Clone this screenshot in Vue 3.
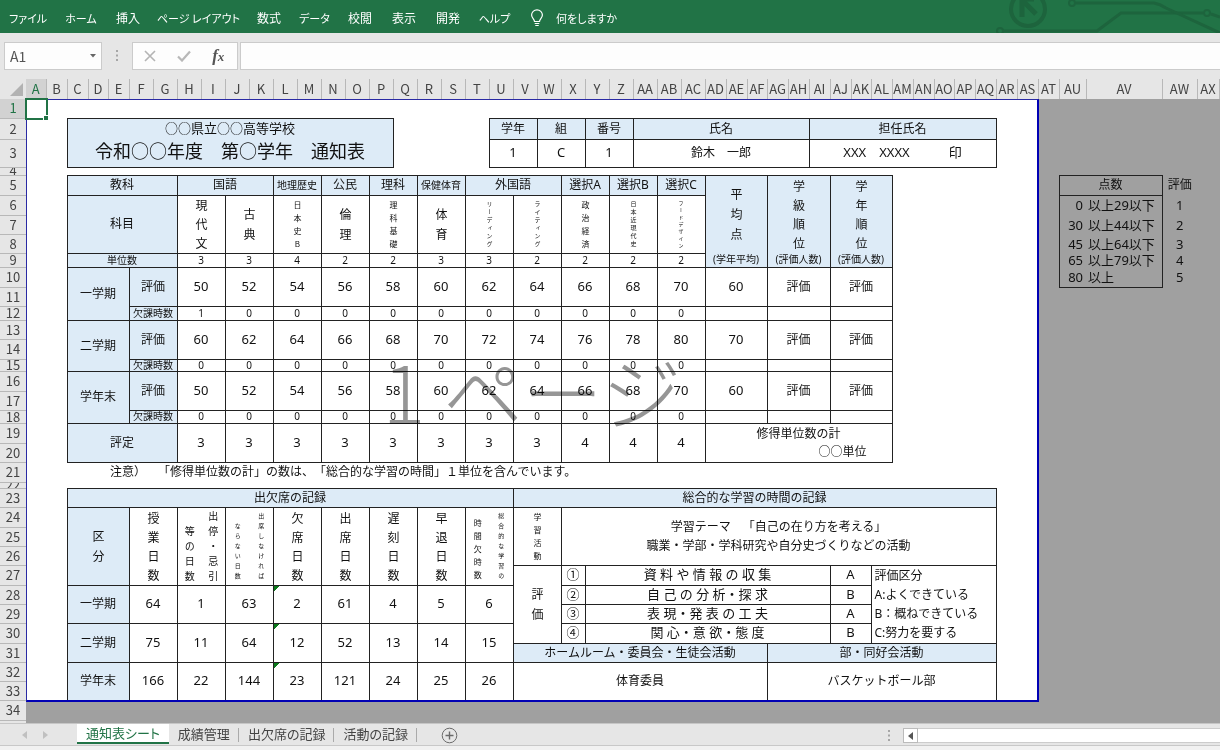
<script setup>
import { ref } from 'vue'

const menus = ['ファイル', 'ホーム', '挿入', 'ページ レイアウト', '数式', 'データ', '校閲', '表示', '開発', 'ヘルプ']
const isKana = (text) => /^[ァ-ー ]+$/.test(text)
const tabs = ['通知表シート', '成績管理', '出欠席の記録', '活動の記録']
const nameBox = ref('A1')
const formula = ref('')

const colWidths = [
  20, 21, 21, 20, 21,
  ...Array(24).fill(24),
  21, 21, 20, 21, 21, 21, 21, 20, 21, 21, 21, 20, 21, 21, 21, 21,
  21, 27, 76, 35, 22,
]
const rowHeights = [
  19, 21, 28, 8, 20, 20, 19, 19, 14, 20, 19, 14, 19, 20, 12, 20, 19, 13,
  20, 19, 20, 6, 19, 20, 19, 19, 20, 19, 19, 20, 19, 19, 19, 20, 19,
]
const HEAD_W = 26
const HEAD_H = 20
const PRINT_COLS = 45
const PRINT_ROWS = 33

const sum = (list) => list.reduce((a, b) => a + b, 0)
const tableWidth = HEAD_W + sum(colWidths)
const printWidth = sum(colWidths.slice(0, PRINT_COLS)) + 1
const printHeight = sum(rowHeights.slice(0, PRINT_ROWS)) + 2

const colName = (n) => (n > 26 ? String.fromCharCode(64 + Math.floor((n - 1) / 26)) : '') + String.fromCharCode(65 + ((n - 1) % 26))
const colIndex = (name) => [...name].reduce((a, ch) => a * 26 + ch.charCodeAt(0) - 64, 0)

const cells = new Map()
const covered = new Set()

function put(range, text, cls = '', extra = {}) {
  const [from, to = from] = range.split(':')
  const [, c1, r1] = from.match(/([A-Z]+)(\d+)/)
  const [, c2, r2] = to.match(/([A-Z]+)(\d+)/)
  const left = colIndex(c1)
  const right = colIndex(c2)
  const top = Number(r1)
  const bottom = Number(r2)
  for (let r = top; r <= bottom; r++) for (let c = left; c <= right; c++) covered.add(r + '-' + c)
  cells.set(top + '-' + left, { lines: text === '' ? [] : String(text).split('\n'), cls, colspan: right - left + 1, rowspan: bottom - top + 1, ...extra })
}
const stack = (range, cls, ...stacks) => put(range, '', cls, { stacks: stacks.map(([text, size]) => ({ chars: [...text], size })) })

put('C2:P2', '○○県立○○高等学校', 'box blue open-bottom mid')
put('C3:P3', '令和○○年度　第○学年　通知表', 'box blue open-top title')

put('U2:V2', '学年', 'box blue')
put('W2:X2', '組', 'box blue')
put('Y2:Z2', '番号', 'box blue')
put('AA2:AH2', '氏名', 'box blue')
put('AI2:AQ2', '担任氏名', 'box blue')
put('U3:V3', '1', 'box mid')
put('W3:X3', 'C', 'box mid')
put('Y3:Z3', '1', 'box mid')
put('AA3:AH3', '鈴木　一郎', 'box')
put('AI3:AQ3', 'XXX　XXXX　　　印', 'box mid')

put('C5:G5', '教科', 'box blue')
put('H5:K5', '国語', 'box blue')
put('L5:M5', '地理歴史', 'box blue small')
put('N5:O5', '公民', 'box blue')
put('P5:Q5', '理科', 'box blue')
put('R5:S5', '保健体育', 'box blue small')
put('T5:W5', '外国語', 'box blue')
put('X5:Y5', '選択A', 'box blue')
put('Z5:AA5', '選択B', 'box blue')
put('AB5:AC5', '選択C', 'box blue')
stack('AD5:AF8', 'box blue open-bottom', ['平均点', 'wide'])
stack('AG5:AI8', 'box blue open-bottom', ['学級順位', 'large'])
stack('AJ5:AL8', 'box blue open-bottom', ['学年順位', 'large'])
put('AD9:AF9', '(学年平均)', 'box blue open-top small')
put('AG9:AI9', '(評価人数)', 'box blue open-top small')
put('AJ9:AL9', '(評価人数)', 'box blue open-top small')
put('C6:G8', '科目', 'box blue')
put('C9:G9', '単位数', 'box blue small')

const pairs = ['H:I', 'J:K', 'L:M', 'N:O', 'P:Q', 'R:S', 'T:U', 'V:W', 'X:Y', 'Z:AA', 'AB:AC'].map((p) => p.split(':'))
const subjects = [
  ['現代文', 'large'], ['古典', 'wide'], ['日本史B', 'tiny'], ['倫理', 'wide'], ['理科基礎', 'tiny'], ['体育', 'wide'],
  ['リーディング', 'micro'], ['ライティング', 'micro'], ['政治経済', 'tiny'], ['日本近現代史', 'micro'], ['フードデザイン', 'nano'],
]
const credits = [3, 3, 4, 2, 2, 3, 3, 2, 2, 2, 2]
const finals = [3, 3, 3, 3, 3, 3, 3, 3, 4, 4, 4]
pairs.forEach(([a, b], i) => {
  stack(`${a}6:${b}8`, 'box', subjects[i])
  put(`${a}9:${b}9`, credits[i], 'box small')
  put(`${a}19:${b}20`, finals[i], 'box mid')
})

const terms = [
  { name: '一学期', row: 10, base: 50, average: 60, absent: 1 },
  { name: '二学期', row: 13, base: 60, average: 70, absent: 0 },
  { name: '学年末', row: 16, base: 50, average: 60, absent: 0 },
]
terms.forEach(({ name, row, base, average, absent }) => {
  put(`C${row}:E${row + 2}`, name, 'box blue')
  put(`F${row}:G${row + 1}`, '評価', 'box blue')
  put(`F${row + 2}:G${row + 2}`, '欠課時数', 'box blue small')
  pairs.forEach(([a, b], i) => {
    put(`${a}${row}:${b}${row + 1}`, base + i * 2, 'box mid')
    put(`${a}${row + 2}:${b}${row + 2}`, i === 0 ? absent : 0, 'box small')
  })
  put(`AD${row}:AF${row + 1}`, average, 'box mid')
  put(`AG${row}:AI${row + 1}`, '評価', 'box')
  put(`AJ${row}:AL${row + 1}`, '評価', 'box')
  put(`AD${row + 2}:AF${row + 2}`, '', 'box')
  put(`AG${row + 2}:AI${row + 2}`, '', 'box')
  put(`AJ${row + 2}:AL${row + 2}`, '', 'box')
})
put('C19:G20', '評定', 'box blue')
put('AD19:AL20', '修得単位数の計\n○○単位', 'box total')
put('E21:AL21', '注意）　「修得単位数の計」の数は、「総合的な学習の時間」１単位を含んでいます。', 'left')

put('C23:U23', '出欠席の記録', 'box blue')
put('V23:AQ23', '総合的な学習の時間の記録', 'box blue')
stack('C24:E27', 'box blue', ['区分', 'wide'])
stack('F24:G27', 'box', ['授業日数', 'large'])
stack('H24:I27', 'box', ['出停・忌引', 'medium'], ['等の日数', 'medium'])
stack('J24:K27', 'box', ['出席しなければ', 'fine'], ['ならない日数', 'fine'])
stack('L24:M27', 'box', ['欠席日数', 'large'])
stack('N24:O27', 'box', ['出席日数', 'large'])
stack('P24:Q27', 'box', ['遅刻日数', 'large'])
stack('R24:S27', 'box', ['早退日数', 'large'])
stack('T24:U27', 'box', ['総合的な学習の', 'fine'], ['時間欠時数', 'tiny'])

const dayPairs = [['F', 'G'], ...pairs.slice(0, 7)]
const attendance = [
  { name: '一学期', row: 28, values: [64, 1, 63, 2, 61, 4, 5, 6] },
  { name: '二学期', row: 30, values: [75, 11, 64, 12, 52, 13, 14, 15] },
  { name: '学年末', row: 32, values: [166, 22, 144, 23, 121, 24, 25, 26] },
]
attendance.forEach(({ name, row, values }) => {
  put(`C${row}:E${row + 1}`, name, 'box blue')
  values.forEach((v, i) => put(`${dayPairs[i][0]}${row}:${dayPairs[i][1]}${row + 1}`, v, i === 3 ? 'box mid flagged' : 'box mid'))
})

stack('V24:W26', 'box', ['学習活動', 'tiny'])
put('X24:AQ26', '学習テーマ　「自己の在り方を考える」\n職業・学部・学科研究や自分史づくりなどの活動', 'box theme')
stack('V27:W30', 'box', ['評価', 'wide'])
const items = [
  ['①', '資 料 や 情 報 の 収 集', 'A'],
  ['②', '自 己 の 分 析・探 求', 'B'],
  ['③', '表 現・発 表 の 工 夫', 'A'],
  ['④', '関 心・意 欲・態 度', 'B'],
]
items.forEach(([no, text, grade], i) => {
  put(`X${27 + i}`, no, 'box mid')
  put(`Y${27 + i}:AI${27 + i}`, text, 'box mid')
  put(`AJ${27 + i}:AK${27 + i}`, grade, 'box mid')
})
put('AL27:AQ30', '評価区分\nA:よくできている\nB：概ねできている\nC:努力を要する', 'box legend')
put('V31:AF31', 'ホームルーム・委員会・生徒会活動', 'box blue')
put('AG31:AQ31', '部・同好会活動', 'box blue')
put('V32:AF33', '体育委員', 'box')
put('AG32:AQ33', 'バスケットボール部', 'box')

put('AU5:AV5', '点数', 'box')
put('AW5', '評価')
const scale = [['0', '以上29以下'], ['30', '以上44以下'], ['45', '以上64以下'], ['65', '以上79以下'], ['80', '以上']]
scale.forEach(([from, text], i) => {
  const last = i === scale.length - 1 ? ' edge-bottom' : ''
  put(`AU${6 + i}`, from, 'right scale edge-left' + last)
  put(`AV${6 + i}`, text, 'left scale edge-right' + last)
  put(`AW${6 + i}`, i + 1, 'scale')
})

const rows = rowHeights.map((height, r) => {
  const list = []
  colWidths.forEach((_, c) => {
    const key = r + 1 + '-' + (c + 1)
    const cell = cells.get(key)
    const paper = c < PRINT_COLS && r < PRINT_ROWS ? ' paper' : ''
    if (cell) list.push({ ...cell, key, cls: cell.cls + paper })
    else if (!covered.has(key)) list.push({ key, cls: paper, lines: [], colspan: 1, rowspan: 1 })
  })
  return { height, list }
})
</script>

<template>
  <div class="app">
    <header class="ribbon">
      <svg class="circuit" width="230" height="33" viewBox="0 0 230 33" fill="none" stroke="#1d643d" aria-hidden="true">
        <circle cx="38" cy="9" r="17" stroke-width="4" />
        <path d="M32 17V0M30 -1h14M32 0l14 14" stroke-width="5" />
        <circle cx="10" cy="31" r="3" stroke-width="2" />
        <path d="M13 31h94l24 -18h82M221 14l9 3" stroke-width="3" />
        <circle cx="217" cy="13" r="3" stroke-width="2" />
        <circle cx="82" cy="3" r="3" stroke-width="2" />
        <path d="M86 3h78q6 1 12 5l54 25" stroke-width="3" />
      </svg>
      <nav class="menus">
        <button v-for="m in menus" :key="m" type="button" :class="{ kana: isKana(m) }">{{ m }}</button>
      </nav>
      <button type="button" class="tell">
        <svg width="14" height="18" viewBox="0 0 14 18" fill="none" stroke="#fff" stroke-width="1.2">
          <path d="M4.5 12.5C4.500 10 1.600 9 1.600 6a5.400 5.200 0 0 1 10.800 0C12.400 9 9.500 10 9.500 12.500zM4.700 14.500h4.600M5.300 16.500h3.400" />
        </svg>
        <span class="kana">何をしますか</span>
      </button>
    </header>

    <div class="bar">
      <div class="namebox">
        <input v-model="nameBox" aria-label="名前ボックス" />
        <button type="button" aria-label="名前の一覧"><svg width="6" height="4" viewBox="0 0 6 4"><path d="M0 0h6L3 3.500z" fill="#666" /></svg></button>
      </div>
      <svg class="grip" width="3" height="12" viewBox="0 0 3 12" fill="#a6a6a6"><path d="M0 0h2v2H0zM0 4.500h2v2H0zM0 9h2v2H0z" /></svg>
      <div class="actions">
        <button type="button" aria-label="キャンセル"><svg width="12" height="12" viewBox="0 0 12 12" fill="none" stroke="#b4b4b4" stroke-width="1.600"><path d="M1 1l10 10M11 1L1 11" /></svg></button>
        <button type="button" aria-label="入力"><svg width="14" height="12" viewBox="0 0 14 12" fill="none" stroke="#b8b8b8" stroke-width="2.200"><path d="M1 6.500l4 4L13 1.500" /></svg></button>
        <button type="button" class="fx" aria-label="関数の挿入"><i>f</i><i class="x">x</i></button>
      </div>
      <input v-model="formula" class="formula" aria-label="数式バー" />
    </div>

    <main class="sheet">
      <table :style="{ width: tableWidth + 'px' }">
        <colgroup>
          <col :style="{ width: HEAD_W + 'px' }" />
          <col v-for="(w, i) in colWidths" :key="i" :style="{ width: w + 'px' }" />
        </colgroup>
        <thead>
          <tr :style="{ height: HEAD_H + 'px' }">
            <td class="corner"><svg width="13" height="13" viewBox="0 0 13 13"><path d="M13 0v13H0z" fill="#b2b2b2" /></svg></td>
            <th v-for="(w, i) in colWidths" :key="i" scope="col" :class="{ picked: i === 0 }"><div class="col-name">{{ colName(i + 1) }}</div></th>
          </tr>
        </thead>
        <tbody>
          <tr v-for="(row, r) in rows" :key="r" :style="{ height: row.height + 'px' }">
            <th scope="row" :class="{ picked: r === 0 }"><div class="row-name" :style="{ height: row.height - 1 + 'px' }">{{ r + 1 }}</div></th>
            <td v-for="cell in row.list" :key="cell.key" :class="cell.cls" :colspan="cell.colspan" :rowspan="cell.rowspan">
              <div v-if="cell.stacks" class="stacks">
                <div v-for="(s, i) in cell.stacks" :key="i" class="stack" :class="s.size">
                  <span v-for="(ch, k) in s.chars" :key="k">{{ ch }}</span>
                </div>
              </div>
              <template v-else>
                <div v-for="(line, i) in cell.lines" :key="i" class="line">{{ line }}</div>
              </template>
            </td>
          </tr>
        </tbody>
      </table>
      <div class="print-area" :style="{ left: HEAD_W + 'px', top: HEAD_H + 'px', width: printWidth + 'px', height: printHeight + 'px' }">
        <span class="page-mark">1 ページ</span>
      </div>
      <div class="cursor" :style="{ left: HEAD_W - 1 + 'px', top: HEAD_H - 1 + 'px', width: colWidths[0] + 3 + 'px', height: rowHeights[0] + 3 + 'px' }"></div>
    </main>

    <footer class="tabbar">
      <div class="arrows">
        <button type="button" aria-label="前のシート"><svg width="5" height="8" viewBox="0 0 5 8"><path d="M5 0v8L0 4z" fill="#c0c0c0" /></svg></button>
        <button type="button" aria-label="次のシート"><svg width="5" height="8" viewBox="0 0 5 8"><path d="M0 0v8l5-4z" fill="#c0c0c0" /></svg></button>
      </div>
      <nav class="tabs">
        <button v-for="(t, i) in tabs" :key="t" type="button" :class="{ active: i === 0 }">{{ t }}</button>
      </nav>
      <button type="button" class="add" aria-label="新しいシート">
        <svg width="17" height="17" viewBox="0 0 17 17" fill="none" stroke="#6a6a6a"><circle cx="8.500" cy="8.500" r="7.300" /><path d="M8.500 4.500v8M4.500 8.500h8" stroke-width="1.400" /></svg>
      </button>
      <svg class="grip end" width="3" height="12" viewBox="0 0 3 12" fill="#a6a6a6"><path d="M0 0h2v2H0zM0 4.500h2v2H0zM0 9h2v2H0z" /></svg>
      <div class="scroll">
        <button type="button" aria-label="左へスクロール"><svg width="5" height="8" viewBox="0 0 5 8"><path d="M5 0v8L0 4z" fill="#555" /></svg></button>
        <div class="track"></div>
      </div>
    </footer>
  </div>
</template>

<style>
body {
  margin: 0;
  overflow: hidden;
}
</style>

<style scoped>
.app {
  display: flex;
  flex-direction: column;
  height: 100vh;
  background: #e6e6e6;
  color: #111;
  font-family: "Noto Sans CJK JP", sans-serif;
  overflow: hidden;
}
button {
  padding: 0;
  border: 0;
  background: none;
  color: inherit;
  font: inherit;
  white-space: nowrap;
}
svg {
  display: block;
}

.ribbon {
  position: relative;
  display: flex;
  flex: none;
  align-items: center;
  height: 33px;
  padding-top: 2px;
  box-sizing: border-box;
  background: #217346;
  color: #fff;
  font-size: 12px;
  font-feature-settings: "palt";
}
.circuit {
  position: absolute;
  right: 0;
  top: 0;
}
.menus {
  display: grid;
  grid-template-columns: 56px 50px 44px 97px 44px 47px 44px 44px 44px 49px;
  justify-items: center;
}
.kana {
  font-size: 11px;
}
.tell {
  display: flex;
  align-items: center;
  gap: 12px;
  margin-left: 11px;
}

.bar {
  display: flex;
  flex: none;
  align-items: center;
  height: 46px;
}
.bar input {
  min-width: 0;
  padding: 0;
  border: 0;
  outline: 0;
  background: #fdfdfd;
  color: #555;
  font: 14px "Noto Sans CJK JP", sans-serif;
}
.namebox {
  display: flex;
  align-items: center;
  width: 98px;
  height: 28px;
  margin-left: 4px;
  padding: 0 5px;
  box-sizing: border-box;
  border: 1px solid #cbcbcb;
  background: #fdfdfd;
}
.namebox input {
  flex: 1;
}
.grip {
  flex: none;
  margin: 0 13px 0 14px;
}
.actions {
  display: flex;
  align-items: center;
  justify-content: space-around;
  width: 106px;
  height: 28px;
  padding: 0 2px 0 0;
  box-sizing: border-box;
  border: 1px solid #cbcbcb;
  background: #fdfdfd;
}
.fx {
  color: #555;
  font: bold 17px/20px "Liberation Serif", serif;
}
.fx .x {
  font-size: 13px;
}
.bar .formula {
  flex: 1;
  height: 28px;
  margin-left: 2px;
  box-sizing: border-box;
  border: 1px solid #cbcbcb;
  border-right: 0;
  padding: 0 6px;
}

.sheet {
  position: relative;
  flex: 1;
  min-height: 0;
  overflow: hidden;
  background: #a0a0a0;
}
table {
  table-layout: fixed;
  border-collapse: collapse;
  font: 12px/18px "Noto Sans", "Noto Sans CJK JP", sans-serif;
  text-spacing-trim: space-all;
}
th,
td {
  padding: 0;
  text-align: center;
  vertical-align: middle;
}
th,
.corner {
  background: #e6e6e6;
  color: #444;
  font: 13px/18px "Noto Sans CJK JP", sans-serif;
}
thead th {
  border-right: 1px solid #b8b8b8;
}
tbody th {
  border-bottom: 1px solid #b8b8b8;
}
.picked {
  background: #d2d2d2;
  color: #217346;
}
.col-name {
  display: flex;
  justify-content: center;
  white-space: nowrap;
}
.row-name {
  display: flex;
  align-items: center;
  justify-content: center;
  overflow: hidden;
}
.corner svg {
  margin: 0 0 0 10px;
}
.paper {
  background: #fff;
}
.box {
  border: 1px solid #222;
}
.blue {
  background: #ddebf7;
}
.open-bottom {
  border-bottom: 0;
}
.open-top {
  border-top: 0;
}
.edge-left {
  border-left: 1px solid #222;
}
.edge-right {
  border-right: 1px solid #222;
}
.edge-bottom {
  border-bottom: 1px solid #222;
}
.line {
  white-space: nowrap;
}
.mid {
  padding-bottom: 2px;
  font-size: 13px;
  line-height: 16px;
}
.scale {
  font-size: 13px;
  line-height: 12px;
}
.small {
  font-size: 10px;
  line-height: 11px;
}
.title {
  padding-bottom: 4px;
  font-size: 18px;
  line-height: 22px;
}
.left {
  padding-left: 2px;
  text-align: left;
}
.right {
  padding-right: 3px;
  text-align: right;
}
.theme {
  line-height: 19px;
}
.legend {
  padding-left: 3px;
  text-align: left;
  line-height: 19px;
}
.total .line + .line {
  padding-right: 25px;
  text-align: right;
}
.flagged {
  background: linear-gradient(135deg, #0b7a1b 4px, #fff 4px) no-repeat left top / 8px 8px, #fff;
}

.stacks {
  display: flex;
  flex-direction: row-reverse;
  align-items: flex-end;
}
.stack {
  display: flex;
  flex: 1;
  flex-direction: column;
  align-items: center;
  font-family: "Noto Sans CJK JP", sans-serif;
  line-height: 1;
}
.stack span {
  writing-mode: vertical-rl;
  text-orientation: upright;
}
.wide {
  gap: 8px;
  font-size: 12px;
}
.large {
  gap: 7px;
  font-size: 12px;
}
.medium {
  gap: 5px;
  font-size: 10px;
}
.tiny {
  gap: 5px;
  font-size: 8px;
}
.fine {
  gap: 4px;
  font-size: 6px;
}
.micro {
  gap: 2px;
  font-size: 6px;
}
.nano {
  gap: 2px;
  font-size: 5px;
}

.print-area {
  position: absolute;
  display: flex;
  align-items: center;
  justify-content: center;
  padding-bottom: 22px;
  box-sizing: border-box;
  border: 1px solid #2a2aa4;
  border-right: 2px solid #0000b4;
  border-bottom: 2px solid #0000b4;
  pointer-events: none;
}
.page-mark {
  color: #969696;
  font-size: 80px;
  font-weight: 300;
  line-height: 1;
  mix-blend-mode: multiply;
  white-space: nowrap;
}
.cursor {
  position: absolute;
  box-sizing: border-box;
  border: 2px solid #217346;
}
.cursor::after {
  content: "";
  position: absolute;
  right: -3px;
  bottom: -3px;
  width: 4px;
  height: 4px;
  border: 1px solid #fff;
  background: #217346;
}

.tabbar {
  display: flex;
  flex: none;
  align-items: flex-start;
  height: 27px;
  box-sizing: border-box;
  border-top: 1px solid #c6c6c6;
  background: linear-gradient(#e6e6e6 21px, #c8c8c8 21px, #c8c8c8 22px, #f1f1f1 22px);
  color: #444;
  font-size: 13px;
}
.arrows {
  display: flex;
  gap: 16px;
  width: 55px;
  padding: 7px 0 0 22px;
}
.tabs {
  display: flex;
  font-feature-settings: "palt";
}
.tabs button {
  position: relative;
  height: 20px;
  padding: 0 9px;
  line-height: 16px;
}
.tabs button + button::after {
  content: "";
  position: absolute;
  right: 0;
  top: 4px;
  height: 14px;
  border-right: 1px solid #aaa;
}
.tabs .active {
  box-sizing: border-box;
  border-bottom: 2px solid #217346;
  background: #fff;
  color: #217346;
}
.add {
  margin: 3px 0 0 24px;
}
.end {
  margin: 6px 12px 0 auto;
}
.scroll {
  display: flex;
  width: 26%;
  height: 15px;
  margin-top: 4px;
}
.scroll button {
  display: flex;
  flex: none;
  align-items: center;
  justify-content: center;
  width: 15px;
  box-sizing: border-box;
  border: 1px solid #bbb;
  background: #fff;
}
.track {
  flex: 1;
  border-top: 1px solid #ccc;
  border-bottom: 1px solid #ccc;
  background: #fff;
}
</style>
